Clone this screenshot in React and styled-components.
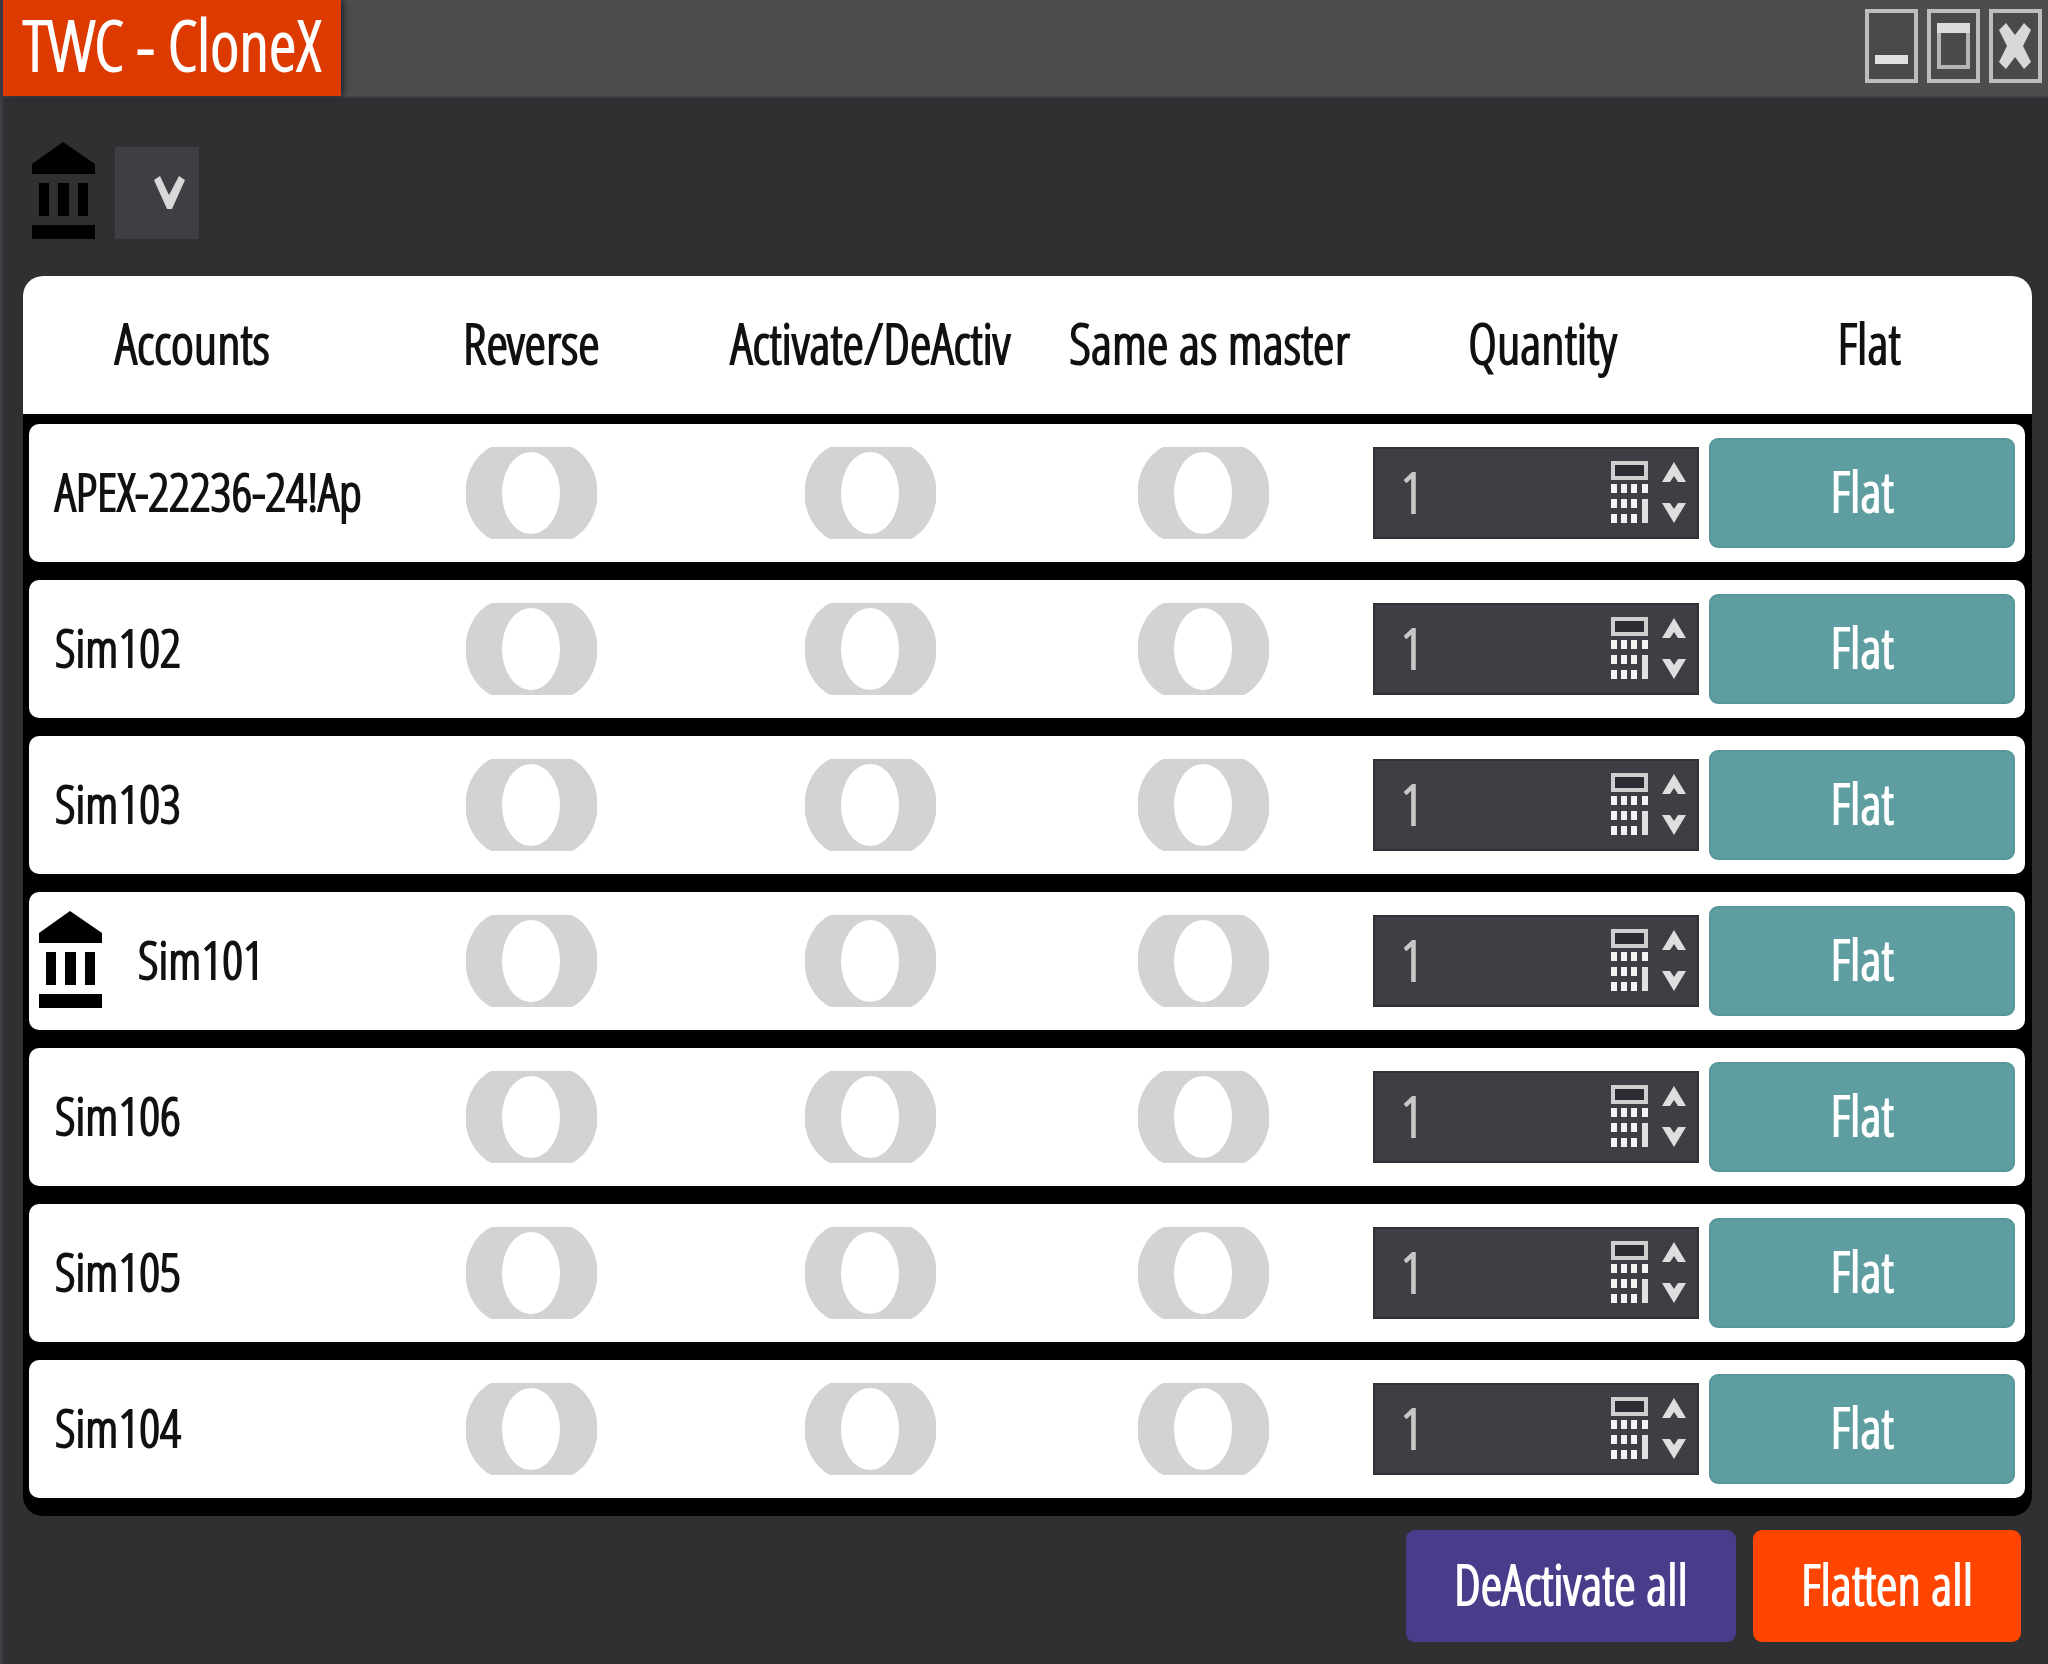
import React, { useState } from "react";
import styled, { createGlobalStyle } from "styled-components";

const GlobalStyle = createGlobalStyle`
  * {
    box-sizing: border-box;
  }
  body {
    margin: 0;
    background: #303032;
  }
  body, button, input, select {
    font-family: "Open Sans Condensed Light", "Roboto Condensed", "Open Sans", sans-serif;
    font-size: 55px;
    line-height: 76px;
    -webkit-text-stroke: 2px currentColor;
  }
  button {
    padding: 0;
    border: none;
    cursor: pointer;
  }
`;

const Window = styled.div`
  display: flex;
  flex-direction: column;
  min-height: 100vh;
  border-left: 3px solid #3c3c41;
  background: #303032;
`;

const TitleBar = styled.header`
  display: flex;
  justify-content: space-between;
  height: 98px;
  background: #4d4d4d;
  border-bottom: 2px solid #3f3f44;
`;

const Title = styled.h1`
  margin: 0;
  padding: 0 20px;
  background: #dc3a00;
  box-shadow: 3px 0 6px #22282c;
  color: white;
  font-size: 70px;
  font-weight: 400;
  line-height: 88px;
  white-space: nowrap;
`;

const WindowControls = styled.div`
  display: flex;
  gap: 9px;
  padding: 9px 6px 0 0;
`;

const WindowButton = styled.button`
  display: flex;
  width: 53px;
  height: 74px;
  background: #4a4a4a;
  border: 4px solid #bdbdbd;
`;

const Toolbar = styled.div`
  display: flex;
  align-items: flex-end;
  gap: 20px;
  padding: 44px 29px 37px;
`;

const DropDown = styled.label`
  position: relative;
  display: flex;
`;

const Select = styled.select`
  appearance: none;
  width: 84px;
  height: 92px;
  border: none;
  background: #3f3e45;
  color: #d8d8d8;
`;

const Chevron = styled.svg`
  position: absolute;
  top: 29px;
  right: 14px;
  pointer-events: none;
`;

const Table = styled.table`
  display: flex;
  flex-direction: column;
  margin: 0 16px 0 20px;
  border-radius: 20px;
  background: black;
  overflow: hidden;
`;

const Head = styled.thead`
  display: block;
  background: white;
`;

const HeadRow = styled.tr`
  display: grid;
  grid-template-columns: 339fr 339fr 339fr 339fr 327fr 326fr;
  align-items: center;
  height: 138px;
`;

const HeadCell = styled.th`
  min-width: 0;
  padding: 0 20px 4px;
  font-weight: 400;
  color: #111;
  white-space: nowrap;
`;

const Body = styled.tbody`
  display: flex;
  flex-direction: column;
  gap: 18px;
  padding: 10px 7px 18px 6px;
`;

const Row = styled.tr`
  display: grid;
  grid-template-columns: 333fr 339fr 339fr 326fr 339fr 320fr;
  align-items: center;
  height: 138px;
  border-radius: 10px;
  background: white;
`;

const Cell = styled.td`
  display: flex;
  justify-content: center;
  min-width: 0;
  padding: ${(props) => props.$pad || "0"};
`;

const AccountCell = styled.th`
  display: flex;
  align-items: center;
  gap: 36px;
  min-width: 0;
  padding: ${(props) => (props.$master ? "0 0 4px 10px" : "0 0 4px 26px")};
  color: #111;
  font-size: 52px;
  font-weight: 400;
  white-space: nowrap;
`;

const Toggle = styled.label`
  position: relative;
  display: flex;
  cursor: pointer;

  input {
    position: absolute;
    inset: 0;
    width: 100%;
    height: 100%;
    margin: 0;
    opacity: 0;
    cursor: pointer;
  }
`;

const QuantityBox = styled.div`
  display: flex;
  align-items: center;
  width: 100%;
  height: 92px;
  padding: 0 11px 2px 0;
  background: #3f3e45;
  border: 2px solid #303037;
`;

const QuantityInput = styled.input`
  flex: 1;
  min-width: 0;
  padding: 0 26px;
  border: none;
  background: none;
  color: #c8c8c8;
`;

const IconButton = styled.button`
  display: flex;
  background: none;
`;

const Spinner = styled.div`
  display: flex;
  flex-direction: column;
  gap: 21px;
  margin-left: 14px;
`;

const FlatButton = styled.button`
  width: 100%;
  height: 110px;
  padding-bottom: 4px;
  border: 2px solid #55979a;
  border-radius: 9px;
  background: #5f9ea0;
  color: white;
`;

const Footer = styled.footer`
  display: flex;
  justify-content: flex-end;
  gap: 17px;
  padding: 14px 27px 19px;
`;

const FooterButton = styled.button`
  height: 112px;
  padding: 0 48px 4px;
  border-radius: 9px;
  background: ${(props) => props.$color};
  color: white;
  white-space: nowrap;
`;

const BankIcon = () => (
  <svg width="63" height="97" viewBox="0 0 63 97" aria-hidden="true">
    <path d="M31 0 L63 22 V32 H0 V22 Z" />
    <path d="M7 41h10v33H7zM26 41h11v33H26zM46 41h10v33H46z" />
    <path d="M0 83h63v14H0z" />
  </svg>
);

const CalculatorIcon = () => (
  <svg width="37" height="62" viewBox="0 0 37 62" aria-hidden="true">
    <path d="M2 2h33v15H2z" fill="#2c2c32" stroke="#cfcfcf" strokeWidth="4" />
    <path
      d="M0 23h6v9H0zM10 23h6v9h-6zM20 23h6v9h-6zM31 23h6v9h-6zM0 38h6v9H0zM10 38h6v9h-6zM20 38h6v9h-6zM0 53h6v9H0zM10 53h6v9h-6zM20 53h6v9h-6z"
      fill="#f4f4f4"
    />
    <path d="M31 38h6v24h-6z" fill="#e2e2e2" />
  </svg>
);

const Switch = ({ label }) => {
  const [on, setOn] = useState(false);

  return (
    <Toggle>
      <input
        type="checkbox"
        aria-label={label}
        checked={on}
        onChange={() => setOn(!on)}
      />
      <svg width="131" height="92" viewBox="0 0 131 92" aria-hidden="true">
        <path
          d="M25 0H106A42 50 0 0 1 106 92H25A42 50 0 0 1 25 0Z"
          fill={on ? "#5f9ea0" : "#d3d3d3"}
        />
        <ellipse cx="65" cy="46" rx="29" ry="41" fill="white" />
      </svg>
    </Toggle>
  );
};

const Quantity = ({ account }) => {
  const [value, setValue] = useState(1);

  return (
    <QuantityBox>
      <QuantityInput
        type="text"
        inputMode="numeric"
        aria-label={`Quantity ${account}`}
        value={value}
        onChange={(e) => setValue(Number(e.target.value) || 0)}
      />
      <IconButton aria-label="Calculator">
        <CalculatorIcon />
      </IconButton>
      <Spinner>
        <IconButton aria-label="Increase" onClick={() => setValue(value + 1)}>
          <svg width="24" height="20" viewBox="0 0 24 20">
            <path d="M12 0L24 20H16L12 14L8 20H0Z" fill="#dedede" />
          </svg>
        </IconButton>
        <IconButton
          aria-label="Decrease"
          onClick={() => setValue(Math.max(0, value - 1))}
        >
          <svg width="24" height="20" viewBox="0 0 24 20">
            <path d="M12 20L24 0H16L12 6L8 0H0Z" fill="#dedede" />
          </svg>
        </IconButton>
      </Spinner>
    </QuantityBox>
  );
};

const columns = [
  "Accounts",
  "Reverse",
  "Activate/DeActiv",
  "Same as master",
  "Quantity",
  "Flat",
];

const accounts = [
  { name: "APEX-22236-24!Ap" },
  { name: "Sim102" },
  { name: "Sim103" },
  { name: "Sim101", master: true },
  { name: "Sim106" },
  { name: "Sim105" },
  { name: "Sim104" },
];

const App = () => {
  return (
    <>
      <GlobalStyle />
      <Window>
        <TitleBar>
          <Title>TWC - CloneX</Title>
          <WindowControls>
            <WindowButton aria-label="Minimize">
              <svg width="45" height="66" viewBox="0 0 45 66">
                <path d="M6 42h33v9H6z" fill="#e0e0e0" />
              </svg>
            </WindowButton>
            <WindowButton aria-label="Maximize">
              <svg width="45" height="66" viewBox="0 0 45 66">
                <path d="M8 12h29v42H8z" fill="none" stroke="#b4b4b4" strokeWidth="4" />
                <path d="M6 10h33v10H6z" fill="#dcdcdc" />
              </svg>
            </WindowButton>
            <WindowButton aria-label="Close">
              <svg width="45" height="66" viewBox="0 0 45 66">
                <path
                  d="M6 17L13 10L22 22L31 10L38 17L30 33L38 49L31 56L22 44L13 56L6 49L14 33Z"
                  fill="#d8d8d8"
                />
              </svg>
            </WindowButton>
          </WindowControls>
        </TitleBar>

        <Toolbar>
          <BankIcon />
          <DropDown>
            <Select aria-label="Master account">
              <option value=""></option>
            </Select>
            <Chevron width="31" height="33" viewBox="0 0 31 33">
              <path d="M0 4L6 0L15 19L25 0L31 4L18 33H13Z" fill="#d8d8d8" />
            </Chevron>
          </DropDown>
        </Toolbar>

        <Table>
          <Head>
            <HeadRow>
              {columns.map((column) => (
                <HeadCell key={column} scope="col">
                  {column}
                </HeadCell>
              ))}
            </HeadRow>
          </Head>
          <Body>
            {accounts.map(({ name, master }) => (
              <Row key={name}>
                <AccountCell scope="row" $master={master}>
                  {master && <BankIcon />}
                  {name}
                </AccountCell>
                <Cell>
                  <Switch label={`Reverse ${name}`} />
                </Cell>
                <Cell>
                  <Switch label={`Activate ${name}`} />
                </Cell>
                <Cell>
                  <Switch label={`Same as master ${name}`} />
                </Cell>
                <Cell $pad="0 6px 0 7px">
                  <Quantity account={name} />
                </Cell>
                <Cell $pad="0 10px 0 4px">
                  <FlatButton>Flat</FlatButton>
                </Cell>
              </Row>
            ))}
          </Body>
        </Table>

        <Footer>
          <FooterButton $color="#483d8b">DeActivate all</FooterButton>
          <FooterButton $color="#ff4500">Flatten all</FooterButton>
        </Footer>
      </Window>
    </>
  );
};

export default App;
